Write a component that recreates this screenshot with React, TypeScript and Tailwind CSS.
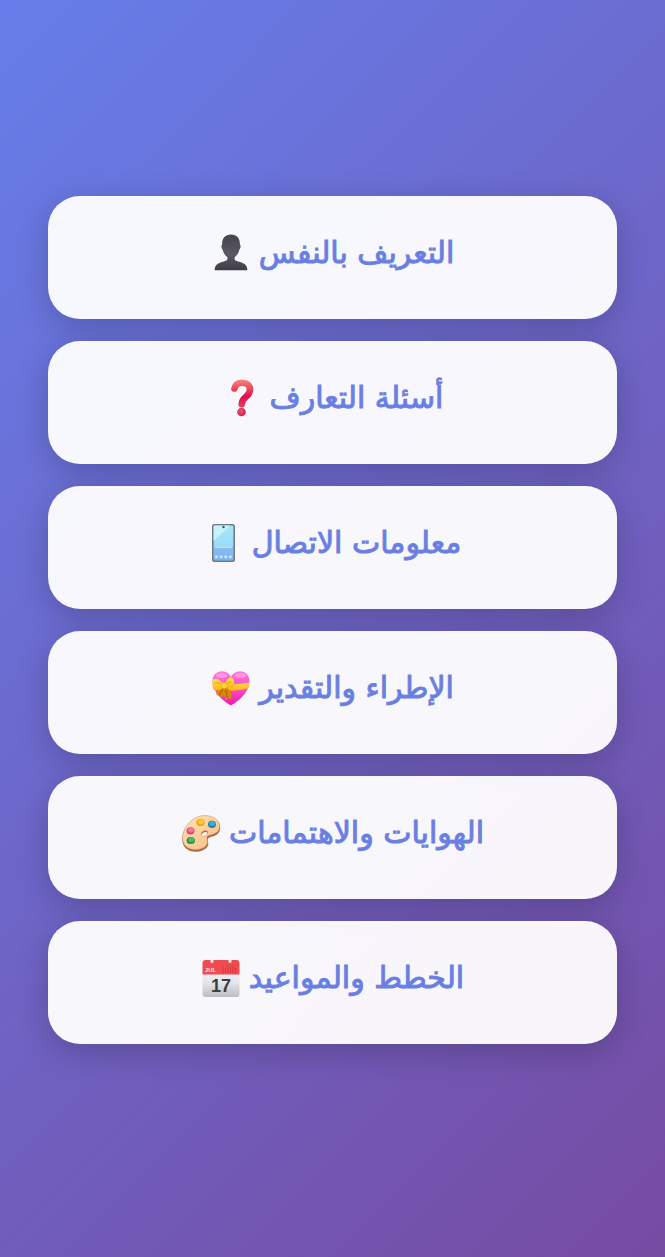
import React from "react";

const PersonIcon: React.FC = () => (
	<svg viewBox="0 0 40 40" className="size-10 shrink-0" aria-hidden="true">
		<defs>
			<linearGradient id="person" x1="0" y1="0" x2="0" y2="1">
				<stop offset="0" stopColor="#45434b" />
				<stop offset="0.55" stopColor="#5a5864" />
				<stop offset="1" stopColor="#3f3e46" />
			</linearGradient>
		</defs>
		<path
			d="M20 1.500c-5.600 0-8.900 3.500-8.900 9.300v.9c-1.100.4-.9 3.600.6 5 .7 3.200 2.300 5.900 4.700 7.500v1.600c0 1.600-1.400 2-3.600 2.600C7 30 4 31.200 3.600 37.200h32.800c-.4-6-3.400-7.200-9.200-8.800-2.200-.6-3.600-1-3.600-2.600v-1.600c2.400-1.600 4-4.300 4.700-7.500 1.500-1.400 1.700-4.600.6-5v-.9c0-5.800-3.300-9.300-8.900-9.300z"
			fill="url(#person)"
		/>
	</svg>
);

const QuestionIcon: React.FC = () => (
	<svg viewBox="0 0 40 40" className="size-10 shrink-0" aria-hidden="true">
		<defs>
			<linearGradient id="question" gradientUnits="userSpaceOnUse" x1="0" y1="1" x2="0" y2="28">
				<stop offset="0" stopColor="#f58a86" />
				<stop offset="0.35" stopColor="#ee4a5b" />
				<stop offset="0.65" stopColor="#dc0d4e" />
				<stop offset="1" stopColor="#e33c5c" />
			</linearGradient>
			<radialGradient id="questionDot" cx="0.4" cy="0.35" r="0.7">
				<stop offset="0" stopColor="#ea5870" />
				<stop offset="1" stopColor="#cf1748" />
			</radialGradient>
		</defs>
		<path
			d="M12.500 10.500C13.500 6.800 16 4.800 20 4.800c5 0 8 2.500 8 6.700 0 3.300-1.700 5.300-4.300 7.500-2.700 2.300-3.800 3.700-4 7.200"
			fill="none"
			stroke="url(#question)"
			strokeWidth="6.600"
			strokeLinecap="round"
		/>
		<circle cx="19.500" cy="34" r="4.300" fill="url(#questionDot)" />
	</svg>
);

const PhoneIcon: React.FC = () => (
	<svg viewBox="0 0 40 40" className="size-10 shrink-0" aria-hidden="true">
		<defs>
			<linearGradient id="screen" x1="0" y1="0" x2="0" y2="1">
				<stop offset="0" stopColor="#a5e6fb" />
				<stop offset="0.6" stopColor="#9bdcf8" />
				<stop offset="1" stopColor="#7db3ee" />
			</linearGradient>
		</defs>
		<rect x="8" y="1" width="23" height="38" rx="2.500" fill="#6d7a84" />
		<rect x="9.600" y="2.600" width="19.800" height="34.800" rx="1.300" fill="url(#screen)" />
		<path d="M9.600 18V4c0-.8.500-1.400 1.300-1.400H26z" fill="#c9f1fc" />
		<rect x="9.600" y="23.500" width="19.800" height="13.900" rx="1.300" fill="#7fb2ee" opacity="0.7" />
		<rect x="11" y="23.500" width="17" height="1.600" fill="#b9e2fc" />
		<circle cx="19.500" cy="4" r="1.200" fill="#46525b" />
		<g fill="#c5e2ff">
			<rect x="11" y="32.500" width="2.800" height="2.800" rx=".7" />
			<rect x="15.700" y="32.500" width="2.800" height="2.800" rx=".7" />
			<rect x="20.400" y="32.500" width="2.800" height="2.800" rx=".7" />
			<rect x="25" y="32.500" width="2.800" height="2.800" rx=".7" />
		</g>
	</svg>
);

const HeartIcon: React.FC = () => (
	<svg viewBox="0 0 40 40" className="size-10 shrink-0" aria-hidden="true">
		<defs>
			<linearGradient id="heart" x1="0" y1="0" x2="0" y2="1">
				<stop offset="0" stopColor="#ff83dc" />
				<stop offset="0.4" stopColor="#fc55cc" />
				<stop offset="1" stopColor="#ed15a8" />
			</linearGradient>
			<linearGradient id="ribbon" x1="0" y1="0" x2="0" y2="1">
				<stop offset="0" stopColor="#ffe04a" />
				<stop offset="1" stopColor="#fcb316" />
			</linearGradient>
			<clipPath id="heartClip">
				<path d="M20 37.500C17 36 1.500 26 1.500 13.500 1.500 7.500 5.500 3.300 11 3.300c4 0 7.200 2.200 9 5.700 1.800-3.500 5-5.700 9-5.700 5.500 0 9.500 4.200 9.500 10.200C38.500 26 23 36 20 37.500z" />
			</clipPath>
		</defs>
		<g clipPath="url(#heartClip)">
			<rect width="40" height="40" fill="url(#heart)" />
			<ellipse cx="10.500" cy="7.500" rx="5.500" ry="2.500" fill="#ffabe9" opacity="0.7" />
			<ellipse cx="29.500" cy="7.500" rx="5.500" ry="2.500" fill="#ffabe9" opacity="0.7" />
			<path d="M0 14.500c13 2.500 27 2.500 40-.5v6c-13 3.500-27 3.500-40 .5z" fill="url(#ribbon)" />
		</g>
		<path d="M10 19.500c-4 2.500-5.500 6-3.800 8l2.800-.5 1.800 3.500 2.200-3.500 1.700 5.500 2-2 3.600.2c1.200-4.500-.8-9.700-5.300-11.400z" fill="#d9850f" />
		<path d="M12.500 16c-3.500-5-8.800-6.500-10.200-4.200-1.300 2.200-1 8 .4 9.700 2 1.900 7 .7 9.800-2.500z" fill="url(#ribbon)" />
		<path d="M14 16c1.200-4.700 5-7.500 7.400-6 2.300 1.500 2.300 7.700.5 9.800-1.900 1.800-5.900 1.200-7.900-.8z" fill="url(#ribbon)" />
		<path d="M11.500 17c-2.500-2-5-2.700-7.200-2.200M15 17c1.700-2 3.400-3 5.200-3" fill="none" stroke="#ef9b0d" strokeWidth="1" />
		<rect x="10.300" y="14.400" width="6" height="6.200" rx="2.400" fill="#ffd43a" stroke="#f0a214" strokeWidth=".7" />
		<path d="M8.500 27c.5-2.200 1.900-4 3.500-5.200M16 30c0-3-.5-5.700-1.500-8" fill="none" stroke="#a55c07" strokeWidth="1" />
	</svg>
);

const PaletteIcon: React.FC = () => (
	<svg viewBox="0 0 40 40" className="size-10 shrink-0" aria-hidden="true">
		<defs>
			<linearGradient id="palette" x1="0" y1="0" x2="1" y2="1">
				<stop offset="0" stopColor="#fde2b8" />
				<stop offset="1" stopColor="#f8bd82" />
			</linearGradient>
		</defs>
		<g transform="translate(0 1)">
			<path
				fillRule="evenodd"
				d="M24 2.600C12.500 2.300 1.500 13.500 1.300 25c-.2 8.500 6.200 13 14 12.700 7.400-.3 12.200-4 12-8.200-.1-3-1.400-5 1.200-6 3-1.200 10.500-1.700 10.700-9.500C39.300 7 32.500 2.800 24 2.600zM22 19c2.700-1.900 5-.6 4.500 1.500-.5 2-3 3.700-5 3.200-2-.6-1.700-3.200.5-4.700z"
				fill="#a56c4b"
			/>
			<path
				fillRule="evenodd"
				d="M24 1.500C12.500 1.200 1.800 12.500 1.600 23.500c-.2 8 6 12.400 13.400 12.100 7-.3 11.500-3.800 11.400-7.800-.1-3-1.500-5.200 1-6.300 3-1.300 10.900-1.600 11.100-8.800C38.700 6 32.500 1.700 24 1.500zM22 17.300c2.700-1.900 5.200-.6 4.700 1.700-.5 2-3.200 3.900-5.200 3.400-2-.6-1.700-3.600.5-5.100z"
				fill="url(#palette)"
				stroke="#d99a68"
				strokeWidth=".6"
			/>
			<ellipse cx="19.500" cy="8.500" rx="4" ry="3.600" fill="#e5a10c" />
			<ellipse cx="19.800" cy="7.900" rx="3" ry="2.500" fill="#fbcb27" />
			<ellipse cx="31" cy="10.300" rx="4" ry="3.600" fill="#187fae" />
			<ellipse cx="31.300" cy="9.600" rx="3" ry="2.400" fill="#42add3" />
			<ellipse cx="9.500" cy="16.800" rx="4" ry="3.600" fill="#d64773" />
			<ellipse cx="9.800" cy="16.100" rx="3" ry="2.400" fill="#ef7898" />
			<ellipse cx="9.800" cy="26.500" rx="4.200" ry="3.600" fill="#239247" />
			<ellipse cx="10.200" cy="25.800" rx="3" ry="2.300" fill="#53b966" />
		</g>
	</svg>
);

const CalendarIcon: React.FC = () => (
	<svg viewBox="0 0 40 40" className="size-10 shrink-0" aria-hidden="true">
		<defs>
			<linearGradient id="page" x1="0" y1="0" x2="0" y2="1">
				<stop offset="0" stopColor="#f9f9fb" />
				<stop offset="0.6" stopColor="#e6e7ec" />
				<stop offset="1" stopColor="#bbbdc4" />
			</linearGradient>
		</defs>
		<rect x="1.500" y="2" width="37" height="37" rx="3" fill="url(#page)" />
		<path d="M1.500 16.500V5c0-1.700 1.300-3 3-3h31c1.700 0 3 1.300 3 3v11.500z" fill="#ef4b50" />
		<path d="M22 8v7M24.500 10v5M27 7v8M29.500 9v6M32 7v8M34.500 10v5" stroke="#d3343d" strokeWidth=".8" />
		<path d="M9.500 1.500h3v2a1.500 1.500 0 0 1-3 0zM27.500 1.500h3v2a1.500 1.500 0 0 1-3 0z" fill="#fbe9eb" />
		<text x="9.500" y="13.500" textAnchor="middle" fill="#ffe7e7" className="font-['Liberation_Sans'] text-[6px] font-bold">
			JUL
		</text>
		<text x="20" y="33.500" textAnchor="middle" fill="#3b3e43" className="font-['Liberation_Sans'] text-[18px] font-bold">
			17
		</text>
	</svg>
);

const categories = [
	{ label: "التعريف بالنفس", Icon: PersonIcon },
	{ label: "أسئلة التعارف", Icon: QuestionIcon },
	{ label: "معلومات الاتصال", Icon: PhoneIcon },
	{ label: "الإطراء والتقدير", Icon: HeartIcon },
	{ label: "الهوايات والاهتمامات", Icon: PaletteIcon },
	{ label: "الخطط والمواعيد", Icon: CalendarIcon },
];

const App: React.FC = () => {
	return (
		<main
			dir="rtl"
			lang="ar"
			className="min-h-screen flex flex-col justify-center gap-[22px] px-12 pt-4 pb-[34px] bg-[linear-gradient(135deg,#667eea_0%,#764ba2_100%)] font-['DejaVu_Sans',sans-serif]"
		>
			{categories.map(({ label, Icon }) => (
				<button
					key={label}
					type="button"
					className="w-full flex items-center justify-center gap-2 pt-[37px] pb-[46px] rounded-[32px] bg-white/95 text-[#667eea] text-[30px] leading-10 shadow-[0_8px_32px_rgba(0,0,0,0.2)] cursor-pointer"
				>
					<span className="[-webkit-text-stroke:1px_#6f82db]">{label}</span>
					<Icon />
				</button>
			))}
		</main>
	);
};

export default App;
